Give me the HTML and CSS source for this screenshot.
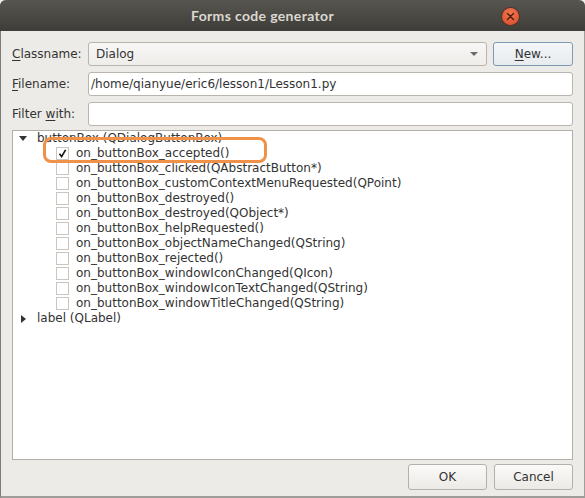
FILE: index.html
```html
<!DOCTYPE html>
<html>
<head>
<meta charset="utf-8">
<link rel="stylesheet" href="styles.css">
</head>
<body>
<div class="window">
  <div class="titlebar">
    <span class="title">Forms code generator</span>
    <span class="close"><svg width="17" height="17" viewBox="0 0 17 17"><path d="M5.5 5.5 L11.5 11.5 M11.5 5.5 L5.5 11.5" stroke="#4a1a10" stroke-width="1.4" stroke-linecap="round"/></svg></span>
  </div>
  <div class="content">
    <div class="row">
      <label class="lbl"><u>C</u>lassname:</label>
      <div class="combo"><span>Dialog</span><span class="arrow"></span></div>
      <button class="btn newbtn"><u>N</u>ew...</button>
    </div>
    <div class="row">
      <label class="lbl"><u>F</u>ilename:</label>
      <div class="input">/home/qianyue/eric6/lesson1/Lesson1.py</div>
    </div>
    <div class="row">
      <label class="lbl">Filter <u>w</u>ith:</label>
      <div class="input"></div>
    </div>
    <div class="tree">
      <div class="node"><span class="tri down"></span>buttonBox (QDialogButtonBox)</div>
      <div class="item"><span class="cb checked"><svg width="11" height="11" viewBox="0 0 11 11"><path d="M2.5 5.8 L4.6 8.6 L8.6 1.8" stroke="#111" stroke-width="1.6" fill="none"/></svg></span>on_buttonBox_accepted()</div>
      <div class="item"><span class="cb"></span>on_buttonBox_clicked(QAbstractButton*)</div>
      <div class="item"><span class="cb"></span>on_buttonBox_customContextMenuRequested(QPoint)</div>
      <div class="item"><span class="cb"></span>on_buttonBox_destroyed()</div>
      <div class="item"><span class="cb"></span>on_buttonBox_destroyed(QObject*)</div>
      <div class="item"><span class="cb"></span>on_buttonBox_helpRequested()</div>
      <div class="item"><span class="cb"></span>on_buttonBox_objectNameChanged(QString)</div>
      <div class="item"><span class="cb"></span>on_buttonBox_rejected()</div>
      <div class="item"><span class="cb"></span>on_buttonBox_windowIconChanged(QIcon)</div>
      <div class="item"><span class="cb"></span>on_buttonBox_windowIconTextChanged(QString)</div>
      <div class="item"><span class="cb"></span>on_buttonBox_windowTitleChanged(QString)</div>
      <div class="node"><span class="tri right"></span>label (QLabel)</div>
    </div>
    <div class="buttons">
      <button class="btn">OK</button>
      <button class="btn">Cancel</button>
    </div>
  </div>
  <div class="highlight"></div>
</div>
</body>
</html>
```
FILE: styles.css
```css
html, body {
  margin: 0;
  padding: 0;
  width: 585px;
  height: 498px;
  overflow: hidden;
  background: #efedea;
}
.window {
  position: relative;
  width: 585px;
  height: 498px;
  box-sizing: border-box;
  background: #edebe7;
  border-left: 1px solid #7d7b77;
  border-right: 1px solid #a09e9a;
  border-bottom: 2px solid #9f9d99;
  border-radius: 6px 6px 0 0;
  font-family: "DejaVu Sans", sans-serif;
  font-size: 12px;
  color: #333;
  display: flex;
  flex-direction: column;
}
.titlebar {
  height: 31px;
  flex: none;
  background: linear-gradient(#56554f, #3e3d39);
  border-radius: 6px 6px 0 0;
  display: flex;
  align-items: center;
  position: relative;
  margin: 0 -1px;
  padding-left: 191px;
}
.title {
  font-family: "Lato", "DejaVu Sans", sans-serif;
  font-weight: bold;
  font-size: 14px;
  color: #dcd8d0;
  letter-spacing: 0.35px;
}
.close {
  position: absolute;
  right: 66px;
  top: 8px;
  width: 17px;
  height: 17px;
  border-radius: 50%;
  background: radial-gradient(circle at 50% 35%, #f07a4f, #d8482a);
  box-shadow: 0 0 0 1px #5a3025;
  display: flex;
}
.content {
  flex: 1;
  display: flex;
  flex-direction: column;
  padding: 11px 11px 0 11px;
}
.row {
  display: flex;
  align-items: center;
  height: 24px;
  margin-bottom: 6px;
}
.row:nth-child(3) { margin-bottom: 4px; }
.lbl {
  width: 76px;
  flex: none;
  color: #333;
}
.lbl u { text-decoration-thickness: 1px; text-underline-offset: 2px; }
.combo {
  flex: 1;
  height: 24px;
  box-sizing: border-box;
  border: 1px solid #b9b5ae;
  border-radius: 3px;
  background: linear-gradient(#f8f7f5, #efedea);
  display: flex;
  align-items: center;
  padding-left: 7px;
  padding-right: 8px;
  justify-content: space-between;
}
.arrow {
  width: 0;
  height: 0;
  border-left: 4px solid transparent;
  border-right: 4px solid transparent;
  border-top: 4px solid #6a6a6a;
}
.btn {
  font-family: "DejaVu Sans", sans-serif;
  font-size: 12px;
  color: #333;
  height: 26px;
  width: 79px;
  box-sizing: border-box;
  border: 1px solid #b4b0aa;
  border-radius: 3px;
  background: linear-gradient(#fbfaf9, #eceae6);
  padding: 0;
}
.btn u { text-decoration-thickness: 1px; text-underline-offset: 2px; }
.newbtn {
  margin-left: 6px;
  width: 80px;
  height: 24px;
  border-color: #7f9ab5;
  background: linear-gradient(#f4f6f8, #e8ebee);
}
.input {
  flex: 1;
  height: 24px;
  box-sizing: border-box;
  border: 1px solid #b9b5ae;
  border-radius: 3px;
  background: #ffffff;
  display: flex;
  align-items: center;
  padding-left: 2px;
}
.tree {
  height: 330px;
  box-sizing: border-box;
  border: 1px solid #b2afa9;
  border-top: 1px solid #b2afa9;
  background: #ffffff;
  padding-top: 0;
}
.node, .item {
  height: 15px;
  line-height: 15px;
  display: flex;
  align-items: center;
  white-space: nowrap;
}
.node { padding-left: 6px; }
.item { padding-left: 43px; }
.tri.down {
  width: 0;
  height: 0;
  border-left: 4px solid transparent;
  border-right: 4px solid transparent;
  border-top: 5px solid #333;
  margin-right: 10px;
}
.tri.right {
  width: 0;
  height: 0;
  border-top: 4px solid transparent;
  border-bottom: 4px solid transparent;
  border-left: 5px solid #333;
  margin-left: 2px;
  margin-right: 11px;
}
.cb {
  width: 13px;
  height: 13px;
  box-sizing: border-box;
  border: 1px solid #c9c6c1;
  background: #fff;
  margin-right: 7px;
  display: flex;
  align-items: center;
  justify-content: center;
  flex: none;
}
.buttons {
  display: flex;
  justify-content: flex-end;
  gap: 7px;
  padding-top: 4px;
}
.highlight {
  position: absolute;
  left: 42px;
  top: 137px;
  width: 224px;
  height: 26px;
  box-sizing: border-box;
  border: 3px solid #f0914a;
  border-radius: 8px;
}
```
